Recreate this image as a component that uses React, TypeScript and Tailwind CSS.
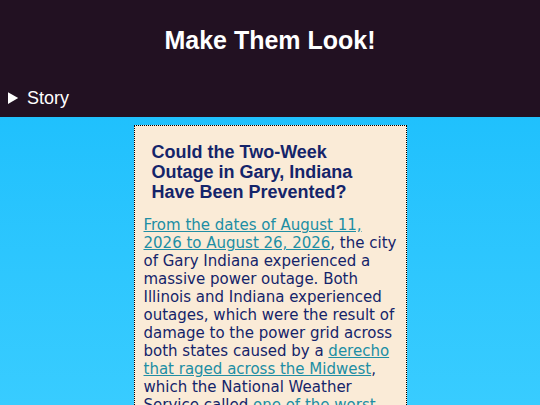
const App = () => {
  return (
    <div className="h-screen overflow-hidden bg-linear-to-b from-[#10bcfc] to-[#38ccff] font-['Liberation_Sans',Arial,sans-serif]">
      <header className="bg-[#221122] text-white">
        <h1 className="pt-[25px] pb-[31px] text-center text-[25px] leading-[30px] font-bold">Make Them Look!</h1>
        <details className="px-2 pb-[7px]">
          <summary className="text-lg leading-6">Story</summary>
        </details>
      </header>

      <main className="mx-auto mt-2 w-[273px] border border-dotted border-black bg-[#faebd7] px-[9px] text-[#14246a]">
        <h2 className="pt-4 pr-6 pb-[14px] pl-2 text-lg leading-5 font-bold">
          Could the Two-Week Outage in Gary, Indiana Have Been Prevented?
        </h2>
        <p className="font-['DejaVu_Sans',Verdana,sans-serif] text-[15px] leading-[18px]">
          <a href="#dates" className="text-[#208ea4] underline">From the dates of August 11, 2026 to August 26, 2026</a>, the
          city of Gary Indiana experienced a massive power outage. Both Illinois and Indiana experienced outages, which were
          the result of damage to the power grid across both states caused by a{" "}
          <a href="#derecho" className="text-[#208ea4] underline">derecho that raged across the Midwest</a>, which the
          National Weather Service called{" "}
          <a href="#storms" className="text-[#208ea4] underline">one of the worst</a>
        </p>
      </main>
    </div>
  );
};

export default App;
